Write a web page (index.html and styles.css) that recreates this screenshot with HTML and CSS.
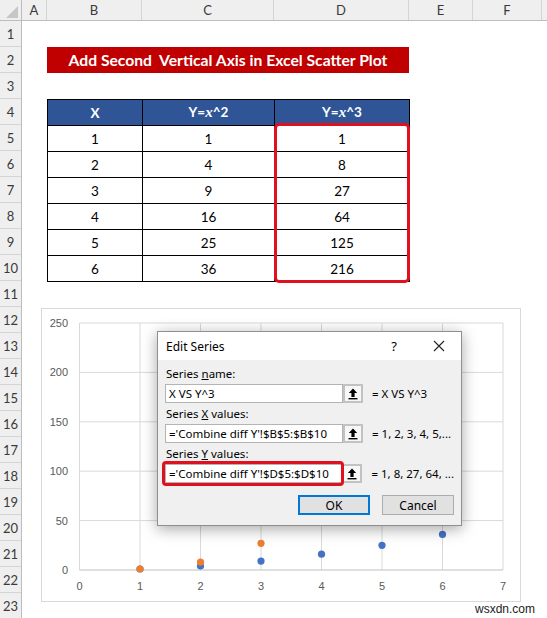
FILE: index.html
```html
<!DOCTYPE html>
<html>
<head>
<meta charset="utf-8">
<link rel="stylesheet" href="styles.css">
</head>
<body>
<div class="colhead">
  <div class="corner"><span class="tri"></span></div>
  <div class="ch w-a">A</div>
  <div class="ch w-b">B</div>
  <div class="ch w-c">C</div>
  <div class="ch w-d">D</div>
  <div class="ch w-e">E</div>
  <div class="ch w-f">F</div>
  <div class="ch w-rest"></div>
</div>
<div class="main">
  <div class="rowhead">
    <div class="rn">1</div><div class="rn">2</div><div class="rn">3</div><div class="rn">4</div>
    <div class="rn">5</div><div class="rn">6</div><div class="rn">7</div><div class="rn">8</div>
    <div class="rn">9</div><div class="rn">10</div><div class="rn">11</div><div class="rn">12</div>
    <div class="rn">13</div><div class="rn">14</div><div class="rn">15</div><div class="rn">16</div>
    <div class="rn">17</div><div class="rn">18</div><div class="rn">19</div><div class="rn">20</div>
    <div class="rn">21</div><div class="rn">22</div><div class="rn">23</div>
  </div>
  <div class="content">
    <div class="title">Add Second  Vertical Axis in Excel Scatter Plot</div>
    <div class="tw">
      <table class="data">
        <colgroup><col class="k1"><col class="k2"><col class="k3"></colgroup>
        <tr><th>X</th><th>Y=<span class="mx">x</span>^2</th><th>Y=<span class="mx">x</span>^3</th></tr>
        <tr><td>1</td><td>1</td><td>1</td></tr>
        <tr><td>2</td><td>4</td><td>8</td></tr>
        <tr><td>3</td><td>9</td><td>27</td></tr>
        <tr><td>4</td><td>16</td><td>64</td></tr>
        <tr><td>5</td><td>25</td><td>125</td></tr>
        <tr><td>6</td><td>36</td><td>216</td></tr>
      </table>
      <div class="hl"></div>
    </div>
    <div class="chart">
      <svg class="plot" width="480" height="294" viewBox="0 0 480 294">
        <rect x="0.5" y="0.5" width="479" height="293" fill="#fff" stroke="#d9d9d9"/>
        <g stroke="#d9d9d9" stroke-width="1">
          <line x1="38.5" y1="15" x2="462" y2="15"/>
          <line x1="38.5" y1="64.4" x2="462" y2="64.4"/>
          <line x1="38.5" y1="113.8" x2="462" y2="113.8"/>
          <line x1="38.5" y1="163.2" x2="462" y2="163.2"/>
          <line x1="38.5" y1="212.6" x2="462" y2="212.6"/>
          <line x1="38.5" y1="15" x2="38.5" y2="262"/>
          <line x1="99" y1="15" x2="99" y2="262"/>
          <line x1="159.5" y1="15" x2="159.5" y2="262"/>
          <line x1="220" y1="15" x2="220" y2="262"/>
          <line x1="280.5" y1="15" x2="280.5" y2="262"/>
          <line x1="341" y1="15" x2="341" y2="262"/>
          <line x1="401.5" y1="15" x2="401.5" y2="262"/>
          <line x1="462" y1="15" x2="462" y2="262"/>
        </g>
        <line x1="38.5" y1="262" x2="462" y2="262" stroke="#bfbfbf"/>
        <g class="lab" text-anchor="end">
          <text x="27" y="19">250</text>
          <text x="27" y="68.4">200</text>
          <text x="27" y="117.8">150</text>
          <text x="27" y="167.2">100</text>
          <text x="27" y="216.6">50</text>
          <text x="27" y="266">0</text>
        </g>
        <g class="lab" text-anchor="middle">
          <text x="38.5" y="282">0</text>
          <text x="99" y="282">1</text>
          <text x="159.5" y="282">2</text>
          <text x="220" y="282">3</text>
          <text x="280.5" y="282">4</text>
          <text x="341" y="282">5</text>
          <text x="401.5" y="282">6</text>
          <text x="462" y="282">7</text>
        </g>
        <g fill="#4472c4">
          <circle cx="99" cy="261" r="3.6"/>
          <circle cx="159.5" cy="258" r="3.6"/>
          <circle cx="220" cy="253.1" r="3.6"/>
          <circle cx="280.5" cy="246.2" r="3.6"/>
          <circle cx="341" cy="237.3" r="3.6"/>
          <circle cx="401.5" cy="226.4" r="3.6"/>
        </g>
        <g fill="#ed7d31">
          <circle cx="99" cy="261" r="3.6"/>
          <circle cx="159.5" cy="254.1" r="3.6"/>
          <circle cx="220" cy="235.3" r="3.6"/>
          <circle cx="280.5" cy="198.8" r="3.6"/>
        </g>
      </svg>
      <div class="dlg">
        <div class="dlg-title">
          <span class="t">Edit Series</span>
          <span class="q">?</span>
          <span class="x"><svg width="12" height="12" viewBox="0 0 12 12"><path d="M1 1 L11 11 M11 1 L1 11" stroke="#222" stroke-width="1.1" fill="none"/></svg></span>
        </div>
        <div class="dlg-body">
          <div class="lbl">Series <u>n</u>ame:</div>
          <div class="frow">
            <div class="inp">X VS Y^3</div>
            <div class="rbtn"><svg width="10" height="12" viewBox="0 0 10 12"><path d="M5 0.5 L0.8 5 H3.4 V9 H6.6 V5 H9.2 Z" fill="#000"/><rect x="0.5" y="10" width="9" height="1.4" fill="#000"/></svg></div>
            <div class="val">= X VS Y^3</div>
          </div>
          <div class="lbl">Series <u>X</u> values:</div>
          <div class="frow">
            <div class="inp">='Combine diff Y'!$B$5:$B$10</div>
            <div class="rbtn"><svg width="10" height="12" viewBox="0 0 10 12"><path d="M5 0.5 L0.8 5 H3.4 V9 H6.6 V5 H9.2 Z" fill="#000"/><rect x="0.5" y="10" width="9" height="1.4" fill="#000"/></svg></div>
            <div class="val">= 1, 2, 3, 4, 5,...</div>
          </div>
          <div class="lbl">Series <u>Y</u> values:</div>
          <div class="frow hrow">
            <div class="inp">='Combine diff Y'!$D$5:$D$10</div>
            <div class="rbtn"><svg width="10" height="12" viewBox="0 0 10 12"><path d="M5 0.5 L0.8 5 H3.4 V9 H6.6 V5 H9.2 Z" fill="#000"/><rect x="0.5" y="10" width="9" height="1.4" fill="#000"/></svg></div>
            <div class="val">= 1, 8, 27, 64, ...</div>
            <div class="rb"></div>
          </div>
          <div class="btns">
            <div class="btn ok">OK</div>
            <div class="btn">Cancel</div>
          </div>
        </div>
      </div>
    </div>
  </div>
</div>
<div class="wm">wsxdn.com</div>
</body>
</html>
```
FILE: styles.css
```css
* { box-sizing: border-box; }
html, body { margin: 0; padding: 0; background: #fff; }
body {
  width: 547px;
  height: 618px;
  overflow: hidden;
  position: relative;
  font-family: "Lato", "Open Sans", sans-serif;
  color: #000;
}
.colhead {
  display: flex;
  height: 21px;
  background: #efefef;
  border-bottom: 1px solid #bdbdbd;
}
.corner {
  width: 22px;
  position: relative;
  border-right: 1px solid #bdbdbd;
}
.tri {
  position: absolute;
  right: 3px;
  bottom: 2px;
  width: 0;
  height: 0;
  border-left: 12px solid transparent;
  border-bottom: 12px solid #c6c6c6;
}
.ch {
  border-right: 1px solid #d4d4d4;
  display: flex;
  align-items: center;
  justify-content: center;
  font-size: 13px;
  color: #3a3a3a;
}
.w-a { width: 25px; }
.w-b { width: 95px; }
.w-c { width: 132px; }
.w-d { width: 135px; }
.w-e { width: 64px; }
.w-f { width: 69px; }
.w-rest { flex: 1; border-right: none; }
.main { display: flex; }
.rowhead {
  width: 22px;
  background: #efefef;
  border-right: 1px solid #bdbdbd;
}
.rn {
  height: 26px;
  border-bottom: 1px solid #d4d4d4;
  display: flex;
  align-items: center;
  justify-content: center;
  font-size: 13px;
  color: #3a3a3a;
}
.content { flex: 1; position: relative; }
.title {
  margin: 26px 0 0 25px;
  width: 362px;
  height: 26px;
  background: #c00000;
  color: #fff;
  font-weight: bold;
  font-size: 15.7px;
  white-space: pre;
  display: flex;
  align-items: center;
  justify-content: center;
}
.tw {
  position: relative;
  margin: 26px 0 0 25px;
  width: 362px;
}
.data {
  border-collapse: collapse;
  table-layout: fixed;
  width: 362px;
}
.k1 { width: 95px; }
.k2 { width: 132px; }
.k3 { width: 135px; }
.data td, .data th {
  border: 1px solid #000;
  height: 26px;
  padding: 0;
  text-align: center;
  font-size: 13.5px;
  font-weight: normal;
}
.data th {
  background: #2f5597;
  color: #fff;
  font-weight: bold;
}
.mx {
  font-family: "Liberation Serif", serif;
  font-style: italic;
  font-size: 15px;
}
.hl {
  position: absolute;
  left: 227px;
  top: 24px;
  width: 136px;
  height: 160px;
  border: 3px solid #e0101e;
  border-radius: 5px;
}
.chart {
  position: relative;
  margin: 26px 0 0 19px;
  width: 480px;
  height: 294px;
}
.plot { display: block; }
.lab text {
  font-family: "Liberation Sans", sans-serif;
  font-size: 11px;
  fill: #595959;
}
.dlg {
  position: absolute;
  left: 116px;
  top: 23px;
  width: 305px;
  height: 195px;
  background: #f0f0f0;
  border: 1px solid #8f8f8f;
  box-shadow: 0 3px 14px rgba(0, 0, 0, 0.35);
  font-family: "Noto Sans", sans-serif;
  font-size: 11.5px;
  color: #000;
}
.dlg-title {
  height: 28px;
  background: #fff;
  display: flex;
  align-items: center;
  padding-left: 8px;
  font-size: 12px;
}
.dlg-title .t { flex: 1; }
.q {
  width: 20px;
  text-align: center;
  margin-right: 29px;
  font-size: 13px;
}
.x {
  width: 12px;
  height: 12px;
  margin-right: 16px;
  display: flex;
}
.dlg-body { padding: 3px 7px 0 7px; }
.lbl {
  height: 21px;
  line-height: 21px;
  padding-left: 1px;
}
.frow {
  display: flex;
  height: 19px;
  align-items: center;
}
.hrow { position: relative; }
.inp {
  width: 178px;
  height: 19px;
  background: #fff;
  border: 1px solid #b4b4b4;
  padding-left: 3px;
  line-height: 17px;
  white-space: nowrap;
  overflow: hidden;
}
.rbtn {
  width: 20px;
  height: 19px;
  border: 2px solid #c2c2c2;
  background: #f7f7f7;
  display: flex;
  align-items: center;
  justify-content: center;
}
.val {
  margin-left: 9px;
  white-space: nowrap;
}
.rb {
  position: absolute;
  left: -3px;
  top: -3px;
  width: 182px;
  height: 25px;
  border: 3px solid #e0101e;
  border-radius: 4px;
}
.btns {
  display: flex;
  justify-content: flex-end;
  gap: 12px;
  margin-top: 12px;
}
.btn {
  width: 72px;
  height: 20px;
  background: #e1e1e1;
  border: 1px solid #adadad;
  display: flex;
  align-items: center;
  justify-content: center;
  font-size: 12px;
}
.btn.ok { border: 2px solid #0078d7; }
.wm {
  position: absolute;
  left: 475px;
  top: 602px;
  font-family: "Liberation Sans", sans-serif;
  font-size: 12px;
  color: #222;
}
```
